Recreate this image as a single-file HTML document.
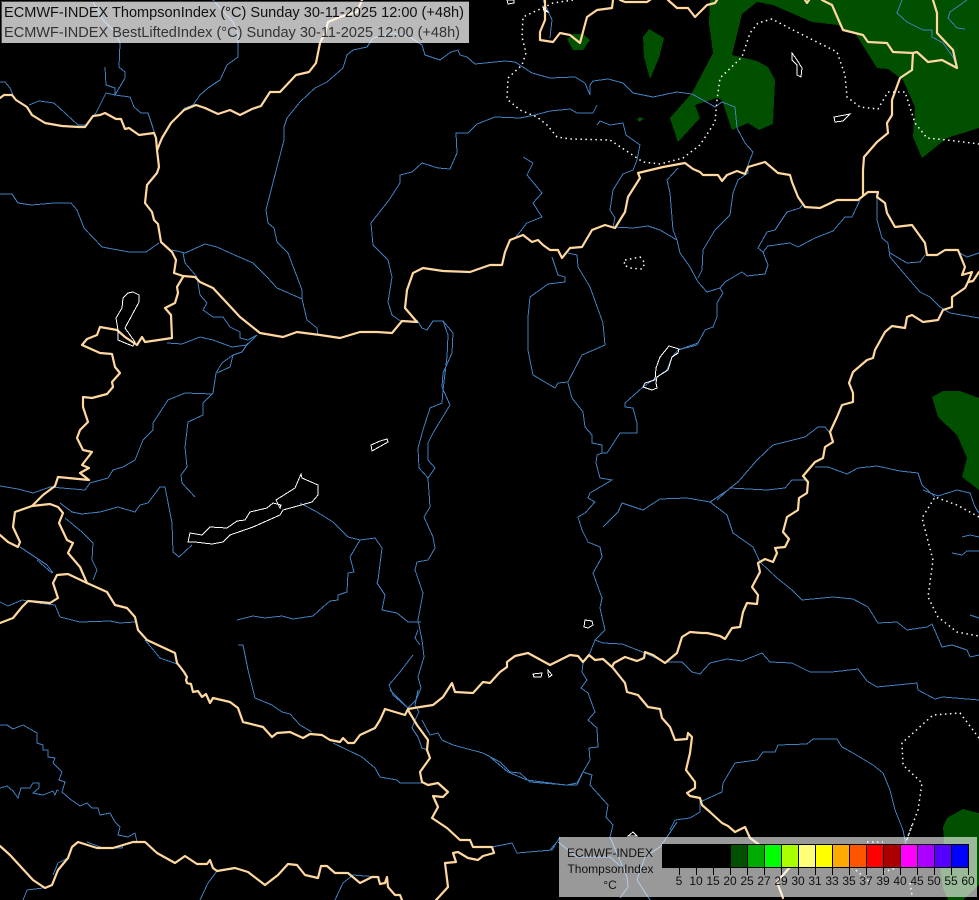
<!DOCTYPE html>
<html><head><meta charset="utf-8"><title>ECMWF-INDEX ThompsonIndex</title>
<style>
html,body{margin:0;padding:0;background:#000;width:979px;height:900px;overflow:hidden}
svg{position:absolute;left:0;top:0}
text{font-family:"Liberation Sans",sans-serif}
.b polyline{fill:none;stroke:#ffd8a0;stroke-width:2.2;stroke-linejoin:round;stroke-linecap:round}
.r polyline{fill:none;stroke:#4080c0;stroke-width:1;shape-rendering:crispEdges}
.d polyline{fill:none;stroke:#fff;stroke-width:1.5;stroke-dasharray:1.5 3.5}
.l polygon{fill:none;stroke:#fff;stroke-width:1;shape-rendering:crispEdges}
.g polygon{fill:#005000;shape-rendering:crispEdges}
</style></head><body>
<svg width="979" height="900" viewBox="0 0 979 900" xmlns="http://www.w3.org/2000/svg">
<rect width="979" height="900" fill="#000"/>
<g class="g">
<polygon points="710,0 709,23 713,53 692,93 670,118 678,142 700,118 695,105 717,98 722,100 732,130 748,123 759,130 773,124 775,80 768,67 757,61 732,55 742,14 757,2 773,5 812,22 838,25 843,30 855,33 877,68 888,69 903,80 915,107 913,137 922,158 947,138 979,128 979,0"/>
<polygon points="643,37 649,29 664,38 659,58 650,79 644,57"/>
<polygon points="567,39 572,34 583,34 590,40 583,50 573,50"/>
<polygon points="637,119 640,117 644,119 639,122"/>
<polygon points="932,397 943,391 960,391 979,398 979,490 962,477 967,458 957,435 938,417"/>
<polygon points="943,827 947,818 963,809 979,813 979,885 963,900 948,900 943,888 940,868 944,840"/>
</g>
<g class="r">
<polyline points="0,82 5,82 10,88 13,95 16,100"/>
<polyline points="29,105 39,101 54,103 78,125 86,125 96,113 106,93 115,95 130,97 134,107 141,113 148,113 153,128 155,135"/>
<polyline points="105,67 106,85 115,88 115,95 125,78 125,72 119,67 120,43 115,32 103,20 93,2"/>
<polyline points="213,0 233,22 238,33 238,57 227,65 220,80 208,88 200,95 193,105 185,108 171,123 162,138 158,150"/>
<polyline points="373,38 367,47 353,50 347,55 343,68 327,82 315,88 300,102 287,118 284,127 284,140 277,167 266,210 268,223 274,228 277,242 288,253 302,290 302,299 307,320 317,328 318,335"/>
<polyline points="373,38 393,33 410,37 422,45 425,55 440,60 451,52 458,50 460,55 467,57 475,64 505,61 515,62 532,73 550,78 575,77 585,83 590,95 590,85 593,81 608,79 623,83 633,93 653,97 677,92 692,94 703,100 715,107 722,102 735,107 737,128 745,143 753,152 748,165 748,173 738,180 733,193 730,215 715,230 703,250 702,270 698,278"/>
<polyline points="597,105 593,113 577,113 570,109 550,111 535,115 520,118 495,117 477,124 468,133 456,133 457,153 450,169 438,168 422,163 412,172 400,175 400,183 389,200 371,223 373,245 388,260 392,277 388,302 392,315 402,322"/>
<polyline points="523,157 533,163 527,175 542,193 533,203 542,217 527,223 515,238"/>
<polyline points="597,125 600,121 610,125 623,123 626,135 640,145 637,160 633,170 623,174 613,190 610,210 615,218 613,227 633,228 648,226 660,230 677,240 680,253 690,267 698,282 707,292 720,288 723,293 717,303 717,317 713,327 705,330 697,345 678,350"/>
<polyline points="678,168 667,180 670,193 673,230 677,240"/>
<polyline points="720,288 725,282 740,273 742,272 747,276 765,274 768,265 763,252 758,248 767,232 775,230 787,212 800,208 802,205"/>
<polyline points="763,252 768,246 790,243 798,247 815,238 833,231 845,217 852,217 860,200"/>
<polyline points="877,197 877,220 882,238 888,243 890,257 907,277 920,292 930,297 940,307 950,313 979,318"/>
<polyline points="890,253 907,263 920,262 925,255"/>
<polyline points="958,252 967,257 979,253"/>
<polyline points="552,257 558,275 565,277 565,282 548,284 530,297 528,317 528,350 533,375 555,388 558,383 568,382 582,355 605,345 603,323 590,287 578,267 577,255 568,253"/>
<polyline points="568,383 572,398 583,412 585,427 592,435 592,443 602,445 602,453 597,455 596,463 600,478 612,480 590,493 588,498 595,502 585,513 578,517 582,530 588,542 600,547 602,557 593,573 602,598 600,608 605,630 595,640 590,653 583,663 582,672 587,680 581,688 588,693 595,712 588,720 597,728 598,747 589,748 590,760 583,772 577,785 565,785 527,780 508,772 490,757"/>
<polyline points="602,453 607,453 620,433 637,433 637,423 633,408 625,407 625,403 643,387 657,377 667,370 672,357 678,350 698,343"/>
<polyline points="603,527 618,512 622,503 643,510 660,499 687,498 710,502 728,490"/>
<polyline points="710,502 727,515 733,533 753,547 760,562 777,578 792,590 802,600 833,597 853,599 868,607 878,623 897,622 907,630 927,627 932,624 942,647 952,645 967,650 970,657 979,655"/>
<polyline points="595,640 603,643 622,644 645,653 664,662 682,662 692,672 700,674 710,663 727,659 742,661 762,653 770,662 792,663 810,672 832,672 858,669 867,681 877,687 917,683 918,690 935,699 943,697 979,700"/>
<polyline points="670,830 675,820 690,818 700,812 700,802 722,792 723,783 735,763 757,760 763,752 775,752 778,745 807,744 813,739 837,739 842,747 853,753 873,765 883,773 890,790 895,810 903,830 906,845"/>
<polyline points="923,490 938,496 957,490 970,493 975,507 979,513"/>
<polyline points="962,537 970,535 979,537"/>
<polyline points="952,553 962,555 967,551 979,551"/>
<polyline points="970,615 979,618"/>
<polyline points="717,500 730,488 738,482 757,460 773,445 805,437 818,427 825,427 830,433"/>
<polyline points="730,488 767,490 785,488 792,480 805,480"/>
<polyline points="815,467 828,467 847,474 858,468 877,466 900,471 918,473 922,485 935,497"/>
<polyline points="0,194 12,194 18,203 32,205 54,203 71,203 77,210 84,228 102,247 129,252 146,252 159,243"/>
<polyline points="172,250 185,253 205,244 217,247 230,253 253,263 267,277 277,288 293,295 302,299"/>
<polyline points="183,253 185,263 197,277 198,283 200,295 207,303 203,310 213,317 223,317 230,327 240,332 240,338 248,340 257,335"/>
<polyline points="167,343 182,344 200,337 213,340 232,347 247,345 257,335"/>
<polyline points="248,343 242,352 233,355 222,363 216,373 213,393 203,403 203,415 188,422 185,447 187,467 181,475 182,483 195,497"/>
<polyline points="233,355 230,367 217,373"/>
<polyline points="212,394 185,393 168,400 153,423 153,430 143,440 135,460 123,467 113,470 108,478 90,483 85,490 50,487 33,493 18,489 0,486"/>
<polyline points="60,503 72,512 82,514 100,512 118,507 135,512 140,505 148,503 160,487 165,487 172,523 173,552 179,557 192,545"/>
<polyline points="65,518 82,532 93,543 92,560 97,570 93,580"/>
<polyline points="20,547 47,565 53,573"/>
<polyline points="37,560 52,573"/>
<polyline points="0,602 8,606 22,600 38,603 55,605 60,617 80,622 110,621 120,623 135,622"/>
<polyline points="145,640 160,658 177,664"/>
<polyline points="237,620 253,616 265,618 282,616 293,619 313,616 323,607 330,601 338,600 338,595 347,592 348,573 354,572 350,557 360,540"/>
<polyline points="300,503 317,512 333,522 348,537 360,540 375,538 382,548 378,580 377,583 385,595 382,610 397,613 408,622 421,622"/>
<polyline points="417,320 422,328 427,330 433,321 443,321 453,333 452,353 443,373 442,387 450,405 433,433 428,443 428,460 435,468 428,478 430,507 424,517 433,537 435,548 428,560 417,562 415,570 423,593 418,620 422,640 424,657 418,677 421,688 416,700 408,708"/>
<polyline points="443,321 448,335 447,357 443,390 442,403 430,408 423,430 418,448 419,468 428,478"/>
<polyline points="413,655 400,672 389,685 393,695 408,708"/>
<polyline points="418,630 415,638 420,645"/>
<polyline points="238,645 243,645 248,670 255,698 272,705 282,712 290,714 300,725 312,732"/>
<polyline points="333,743 362,757 375,768 380,777 397,780 400,783 422,783"/>
<polyline points="390,690 408,708"/>
<polyline points="418,690 415,705 419,712 415,720 412,728 418,737 422,748 428,750"/>
<polyline points="422,720 430,735 438,733 442,740 453,745 483,753 500,762 510,772 520,773 530,782 567,785 577,783 583,772 592,775 590,785 608,805 606,817 613,825 610,837 627,877 628,887 620,898"/>
<polyline points="677,822 667,837 660,847 645,857 637,880 650,900"/>
<polyline points="560,837 552,850 517,853 512,843 492,847"/>
<polyline points="558,842 577,857 610,857 625,870"/>
<polyline points="550,850 557,842"/>
<polyline points="0,725 7,725 13,729 23,725 37,733 37,743 43,745 43,750 48,750 48,757 55,758 53,763 62,772 59,780 65,782 62,792 70,799 80,806 87,803 92,808 98,808 100,815 110,813 115,822 120,827 118,835 128,837 135,833 137,842 148,843"/>
<polyline points="0,788 7,786 13,791 18,798 21,788 30,788 33,783 39,783 39,788 33,793 43,795 53,791 55,795 57,790 59,791"/>
<polyline points="23,900 27,890 43,888"/>
<polyline points="53,875 58,863 68,858"/>
<polyline points="200,900 208,883 217,871"/>
<polyline points="335,900 343,883 353,875 365,876 380,877"/>
<polyline points="87,842 103,848 122,848 123,845"/>
<polyline points="543,0 552,20 550,38"/>
<polyline points="902,0 897,13 907,22 923,30 932,30 932,37 943,43 953,57 957,68"/>
<polyline points="967,0 950,12 948,18 957,28 965,29"/>
</g>
<g class="b">
<polyline points="0,98 4,95 12,95 16,100 27,107 32,115 45,123 62,126 79,127 85,127 93,116 100,115 105,113 116,119 121,119 125,129 129,128 139,135 154,133 156,138 157,150 159,167 157,173 147,185 145,203 152,212 154,220 158,224 161,242 172,252 176,260 174,273 183,276 195,277"/>
<polyline points="157,150 162,138 171,123 184,110 196,105 205,108 218,114 230,110 240,115 252,109 261,106 270,92 280,92 296,75 309,72 316,63 320,43 325,33 328,22 340,17 357,12 362,0"/>
<polyline points="183,277 177,287 178,293 175,303 165,308 171,315 172,338 145,342 142,337 137,345 125,337 117,330 100,327 97,335 87,339 82,345 100,353 112,354 115,367 120,373 112,382 113,387 107,394 92,398 83,397 83,407 88,422 80,430 77,438 83,450 92,452 82,465 89,468 80,473 89,480 58,477 55,486 43,495 32,506 15,512 13,527 20,542 18,547 8,542 0,535"/>
<polyline points="32,506 50,504 58,507 63,513 59,523 67,540 73,543 68,553 80,567 87,583"/>
<polyline points="0,623 13,618 22,607 28,601 50,603 58,598 53,583 57,575 68,574 87,583 107,592 115,605 127,608 135,617 138,630 147,640 175,653 177,663 181,668 184,672 187,677 186,680 187,683 191,684 193,692 198,691 202,697 206,694 210,703 213,698 230,702 238,708 243,722 263,727 272,737 277,733 290,732 303,738 310,734 322,735 330,740 340,742 343,738 348,743 354,743 360,735 375,728 380,720 385,709 405,715 408,709 420,707 433,705 443,697 452,683 455,692 473,693 483,682 490,683 500,672 507,667 507,662 515,656 528,653 550,665 570,655 578,656 583,662 589,655 595,660 603,659 612,667 614,663 625,657 637,661 644,658 645,652 653,655 665,663 677,653 682,637 690,632 702,633 707,633 720,636 725,639 732,628 740,627 743,612 747,603 757,604 758,595 752,587 760,572 758,563 765,559 773,562 777,553 775,548 785,547 789,539 783,532 787,517 798,510 799,498 807,493 808,482 803,476 815,462 823,458 825,447 833,442 830,432 837,417 842,405 853,402 853,393 849,383 853,372 867,360 873,358 875,350 885,332 892,326 905,328 907,317 912,315 923,322 938,320 943,310 952,307 952,297 965,288 968,282 973,281 979,272"/>
<polyline points="968,282 972,272 962,275 965,267 958,250 945,250 937,255 927,255 925,243 912,225 895,227 887,213 885,203 877,197 878,192 868,192 858,200 837,200 820,208 805,207 798,197 792,182 790,175 778,173 765,162 748,167 745,174 737,171 727,175 722,181 718,175 703,175 700,172 693,169 685,163 663,167 638,173 640,178 628,197 625,212 615,228 605,225 592,230 582,247 570,248 562,258 558,250 550,250 543,245 538,240 532,242 523,235 510,240 505,252 502,265 490,265 470,272 443,271 423,268 413,273 407,290 405,308 417,322 402,321 392,333 377,332 360,332 340,338 320,335 297,332 283,337 260,333 240,317 227,303 213,288 200,282 195,277"/>
<polyline points="545,0 545,20 540,32 540,40 553,42 560,33 570,35 580,43 587,17 597,10 612,8 613,0"/>
<polyline points="620,0 625,2 640,2 647,2 650,0"/>
<polyline points="668,0 677,8 688,8 695,17 707,5 715,3 717,0"/>
<polyline points="805,0 807,3 809,0"/>
<polyline points="822,0 832,5 843,30 863,35 868,42 887,43 893,52 913,53 917,52 928,62 942,60 957,68 953,50 937,33 937,13 933,0"/>
<polyline points="913,53 912,70 900,78 892,100 892,115 887,123 888,133 877,142 864,157 863,170 863,195"/>
<polyline points="408,710 417,725 428,740 427,750 430,758 420,772 422,782 428,785 438,783 448,792 443,797 433,796 438,807 432,818 447,828 460,840 470,840 473,847 492,847 494,853 483,856 478,860 468,858 458,852 453,853 456,862 445,863 448,887 438,898 436,900"/>
<polyline points="0,846 10,855 33,880 45,888 52,885 58,870 68,858 72,847 78,842 97,848 113,848 133,842 145,842 157,853 175,863 185,856 197,864 207,864 210,860 213,868 217,871 235,868 248,872 265,885 278,875 288,864 297,865 305,875 318,878 321,866 327,866 335,873 348,873 360,883 372,877 378,877 380,884 385,883 387,877 388,887 395,895 400,895 402,900"/>
<polyline points="613,668 625,683 627,692 638,695 648,707 660,709 662,718 670,727 675,740 687,739 688,733 692,737 690,753 686,770 695,782 695,788 687,793 690,796 700,798 702,805 710,812 722,823 728,826 735,832 745,827 750,838 790,867 777,882 783,898"/>
</g>
<g class="d">
<polyline points="573,0 553,3 538,10 523,17 522,37 526,53 522,65 508,78 507,99 520,110 537,117 547,125 557,137 570,139 610,140 643,162 660,164 683,158 700,145 715,122 717,100 720,78 742,57 750,33 758,23 772,19 793,30 837,52 845,75 847,97 860,107 878,109 888,92 905,92 915,123 927,138 947,140 979,144"/>
<polyline points="625,260 640,257 645,263 642,269 630,268 624,265 625,260"/>
<polyline points="979,517 957,505 935,497 922,518 933,560 928,597 938,617 957,632 979,636"/>
<polyline points="979,738 960,713 933,715 902,743 903,765 922,783 918,810 906,842"/>
<polyline points="912,825 906,842"/>
<polyline points="910,883 912,895"/>
<polyline points="852,867 870,882"/>
<polyline points="883,872 897,868"/>
<polyline points="867,842 883,842"/>
</g>
<g class="l">
<polygon points="301,474 302,478 318,485 318,495 312,502 283,510 280,515 253,527 230,535 223,542 212,544 195,542 188,542 190,533 202,535 210,527 227,528 237,521 245,520 250,512 267,508 273,503 281,505 280,508 276,500 295,488"/>
<polygon points="371,445 380,441 387,439 388,442 372,451"/>
<polygon points="133,292 139,295 139,302 125,328 135,342 133,346 125,343 118,340 118,330 116,318 122,308 123,298 128,293"/>
<polygon points="669,346 679,349 678,353 672,357 668,370 657,377 656,383 657,388 652,390 643,387 645,383 655,380 656,368 660,357"/>
<polygon points="792,53 797,60 802,68 801,77 797,75 797,65 792,60"/>
<polygon points="834,117 850,114 843,121 835,122"/>
<polygon points="585,620 592,621 593,625 588,628 584,627"/>
<polygon points="533,674 542,673 541,677 534,677"/>
<polygon points="548,670 552,675 549,677 548,673"/>
<polygon points="628,836 633,832 637,836"/>
<polygon points="507,0 508,4 514,3 514,0"/>
<polygon points="543,7 548,12 544,11"/>
</g>
<rect x="1" y="1" width="468" height="42" fill="#fff" fill-opacity=".73"/>
<path d="M1.5 43V1.5H469" fill="none" stroke="#444" stroke-width="1"/>
<text x="4" y="17" font-size="14.5" fill="#111" textLength="460" lengthAdjust="spacingAndGlyphs">ECMWF-INDEX ThompsonIndex (°C) Sunday 30-11-2025 12:00 (+48h)</text>
<text x="4" y="37" font-size="14.5" fill="#333" textLength="456" lengthAdjust="spacingAndGlyphs">ECMWF-INDEX BestLiftedIndex (°C) Sunday 30-11-2025 12:00 (+48h)</text>
<rect x="559" y="837" width="418" height="60" fill="#fff" fill-opacity=".6"/>
<text x="610" y="857" font-size="12" fill="#111" text-anchor="middle">ECMWF-INDEX</text>
<text x="610.5" y="873" font-size="12" fill="#111" text-anchor="middle">ThompsonIndex</text>
<text x="610" y="889" font-size="12" fill="#111" text-anchor="middle">°C</text>
<g shape-rendering="crispEdges">
<rect x="662" y="844" width="68" height="23" fill="#000"/>
<rect x="730" y="844" width="17" height="23" fill="#005000"/>
<rect x="747" y="844" width="17" height="23" fill="#00aa00"/>
<rect x="764" y="844" width="17" height="23" fill="#00ff00"/>
<rect x="781" y="844" width="17" height="23" fill="#aaff00"/>
<rect x="798" y="844" width="17" height="23" fill="#ffff77"/>
<rect x="815" y="844" width="17" height="23" fill="#ffff00"/>
<rect x="832" y="844" width="17" height="23" fill="#ffaa00"/>
<rect x="849" y="844" width="17" height="23" fill="#ff5500"/>
<rect x="866" y="844" width="17" height="23" fill="#ff0000"/>
<rect x="883" y="844" width="17" height="23" fill="#aa0000"/>
<rect x="900" y="844" width="17" height="23" fill="#ff00ff"/>
<rect x="917" y="844" width="17" height="23" fill="#aa00ff"/>
<rect x="934" y="844" width="17" height="23" fill="#5500ff"/>
<rect x="951" y="844" width="17" height="23" fill="#0000ff"/>
<path d="M662.5 844.5H968.5V867.5H662.5Z" fill="none" stroke="#000"/>
<path d="M679.5 844V875M696.5 844V875M713.5 844V875M730.5 844V875M747.5 844V875M764.5 844V875M781.5 844V875M798.5 844V875M815.5 844V875M832.5 844V875M849.5 844V875M866.5 844V875M883.5 844V875M900.5 844V875M917.5 844V875M934.5 844V875M951.5 844V875M968.5 844V875" stroke="#000" fill="none"/>
</g>
<g font-size="12" fill="#111" text-anchor="middle">
<text x="679" y="885">5</text><text x="696" y="885">10</text><text x="713" y="885">15</text><text x="730" y="885">20</text><text x="747" y="885">25</text><text x="764" y="885">27</text><text x="781" y="885">29</text><text x="798" y="885">30</text><text x="815" y="885">31</text><text x="832" y="885">33</text><text x="849" y="885">35</text><text x="866" y="885">37</text><text x="883" y="885">39</text><text x="900" y="885">40</text><text x="917" y="885">45</text><text x="934" y="885">50</text><text x="951" y="885">55</text><text x="968" y="885">60</text>
</g>
</svg>
</body></html>
